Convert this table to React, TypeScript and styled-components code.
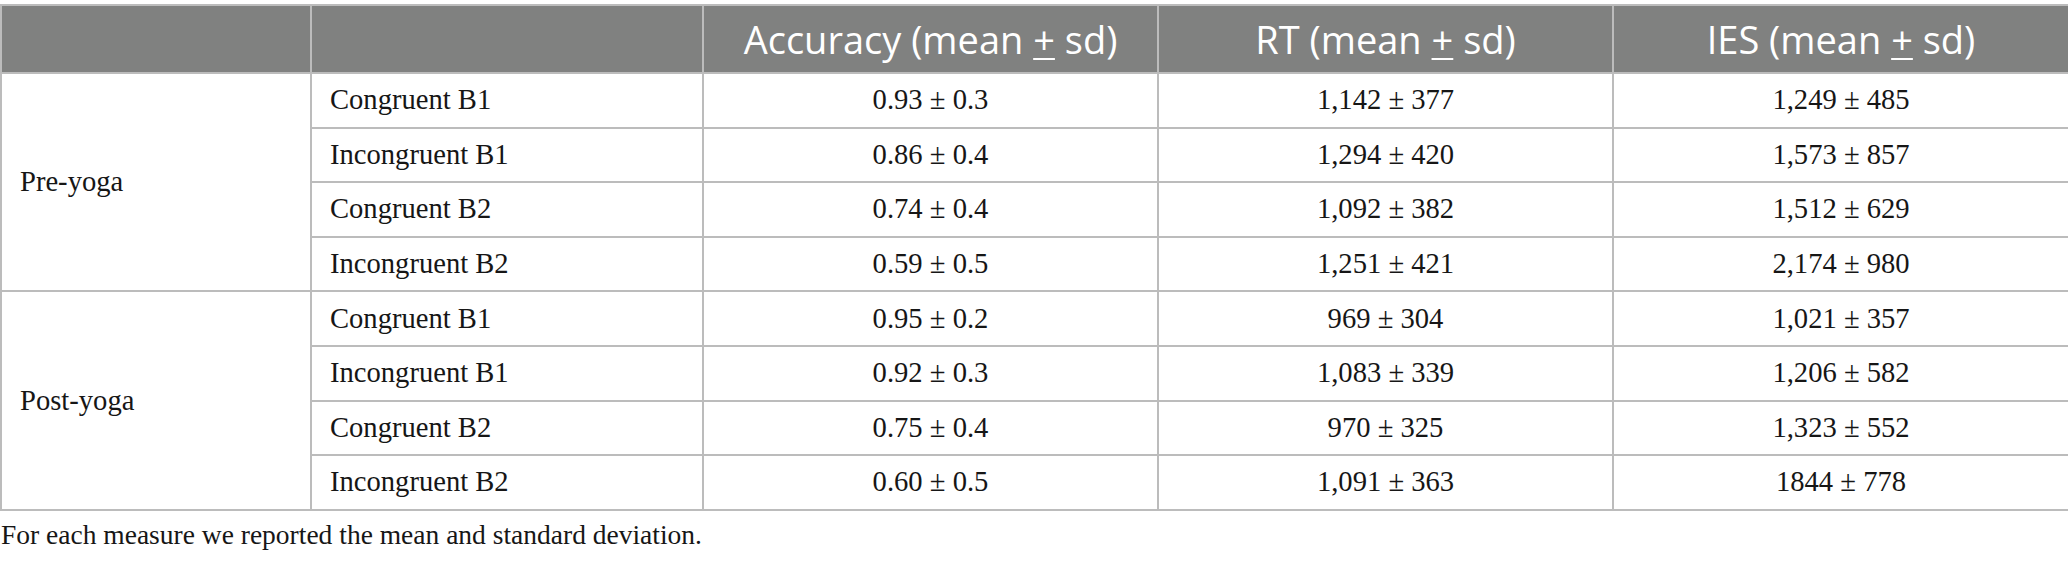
import React from "react";
import styled, { createGlobalStyle } from "styled-components";

const Global = createGlobalStyle`
  html, body { margin: 0; padding: 0; background: #ffffff; }
  body { font-family: "Liberation Serif", "Times New Roman", serif; color: #1a1a1a; }
`;

const Page = styled.div`
  padding-top: 4px;
  width: 2068px;
`;

const Table = styled.table`
  width: 2068px;
  table-layout: fixed;
  border-collapse: collapse;
  border: 2px solid #bcbcbc;
`;

const HeadCell = styled.th`
  background: #808180;
  color: #ffffff;
  font-family: "Open Sans", "Noto Sans", sans-serif;
  font-weight: 400;
  font-size: 38px;
  height: 66px;
  padding: 0;
  text-align: center;
  vertical-align: middle;
  border: 2px solid #bcbcbc;
  border-top: none;
`;

const PlusMinus = styled.span`
  text-decoration: underline;
  text-decoration-thickness: 2px;
  text-underline-offset: 4px;
`;

const Cell = styled.td<{ $align?: "left" | "center" }>`
  font-family: "Liberation Serif", "Times New Roman", serif;
  font-size: 28.6px;
  color: #161616;
  height: 52.6px;
  padding: 0 0 0 ${(p) => (p.$align === "center" ? "0" : "18px")};
  text-align: ${(p) => p.$align ?? "left"};
  vertical-align: middle;
  border: 2px solid #bcbcbc;
  white-space: nowrap;
`;

const Footnote = styled.p`
  margin: 8px 0 0 1px;
  font-family: "Liberation Serif", "Times New Roman", serif;
  font-size: 27.5px;
  color: #161616;
`;

type Row = { cond: string; acc: string; rt: string; ies: string };

const groups: { name: string; rows: Row[] }[] = [
  {
    name: "Pre-yoga",
    rows: [
      { cond: "Congruent B1", acc: "0.93 ± 0.3", rt: "1,142 ± 377", ies: "1,249 ± 485" },
      { cond: "Incongruent B1", acc: "0.86 ± 0.4", rt: "1,294 ± 420", ies: "1,573 ± 857" },
      { cond: "Congruent B2", acc: "0.74 ± 0.4", rt: "1,092 ± 382", ies: "1,512 ± 629" },
      { cond: "Incongruent B2", acc: "0.59 ± 0.5", rt: "1,251 ± 421", ies: "2,174 ± 980" },
    ],
  },
  {
    name: "Post-yoga",
    rows: [
      { cond: "Congruent B1", acc: "0.95 ± 0.2", rt: "969 ± 304", ies: "1,021 ± 357" },
      { cond: "Incongruent B1", acc: "0.92 ± 0.3", rt: "1,083 ± 339", ies: "1,206 ± 582" },
      { cond: "Congruent B2", acc: "0.75 ± 0.4", rt: "970 ± 325", ies: "1,323 ± 552" },
      { cond: "Incongruent B2", acc: "0.60 ± 0.5", rt: "1,091 ± 363", ies: "1844 ± 778" },
    ],
  },
];

const headers = ["Accuracy", "RT", "IES"];

export default function App() {
  return (
    <Page>
      <Global />
      <Table>
        <colgroup>
          <col style={{ width: 310 }} />
          <col style={{ width: 392 }} />
          <col style={{ width: 455 }} />
          <col style={{ width: 455 }} />
          <col style={{ width: 456 }} />
        </colgroup>
        <thead>
          <tr>
            <HeadCell />
            <HeadCell />
            {headers.map((h) => (
              <HeadCell key={h}>
                {h} (mean <PlusMinus>+</PlusMinus> sd)
              </HeadCell>
            ))}
          </tr>
        </thead>
        <tbody>
          {groups.map((g) =>
            g.rows.map((r, i) => (
              <tr key={g.name + r.cond}>
                {i === 0 && <Cell rowSpan={g.rows.length}>{g.name}</Cell>}
                <Cell>{r.cond}</Cell>
                <Cell $align="center">{r.acc}</Cell>
                <Cell $align="center">{r.rt}</Cell>
                <Cell $align="center">{r.ies}</Cell>
              </tr>
            ))
          )}
        </tbody>
      </Table>
      <Footnote>For each measure we reported the mean and standard deviation.</Footnote>
    </Page>
  );
}
